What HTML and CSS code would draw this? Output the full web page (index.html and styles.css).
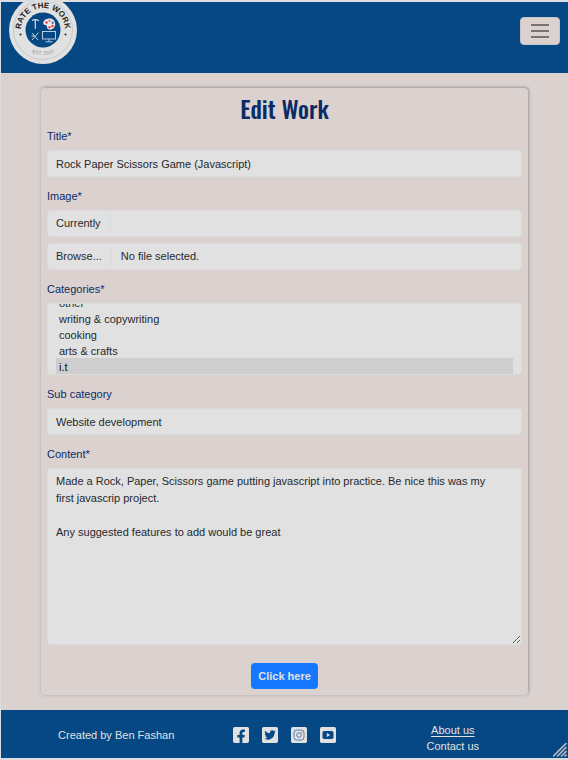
FILE: index.html
```html
<!DOCTYPE html>
<html lang="en">
<head>
<meta charset="utf-8">
<meta name="viewport" content="width=device-width, initial-scale=1">
<title>Edit Work</title>
<link rel="stylesheet" href="styles.css">
</head>
<body>
<header class="site-header">
  <a class="logo" href="#" aria-label="Rate the Work">
    <svg viewBox="0 0 68 68">
      <defs>
        <path id="arc-top" d="M12 34a22 22 0 0 1 44 0"/>
        <path id="arc-bottom" d="M9 34a25 25 0 0 0 50 0"/>
      </defs>
      <circle cx="34" cy="34" r="34" fill="#e1e1e1"/>
      <circle cx="34" cy="34" r="29.500" fill="none" stroke="#b4b8be" stroke-width=".6"/>
      <circle cx="34" cy="34" r="17.500" fill="#064884"/>
      <text class="logo-name" text-anchor="middle"><textPath href="#arc-top" startOffset="50%">RATE THE WORK</textPath></text>
      <text class="logo-est" text-anchor="middle"><textPath href="#arc-bottom" startOffset="50%">EST. 2024</textPath></text>
      <circle cx="11.500" cy="38.500" r="1" fill="#222"/>
      <circle cx="56.500" cy="38.500" r="1" fill="#222"/>
      <path d="M23 24.500q3-2 7 .2M26.300 24v9" fill="none" stroke="#d4dce6" stroke-width="1.200"/>
      <path d="M41 22.500c-4.500 0-7 2.200-6.700 5 .2 1.600 1.600 1.500 2.700 1.700 1.500.3.500 3 2.200 4.100 2.500 1.500 7-.8 7-5 0-3.300-2.200-5.800-5.200-5.800z" fill="#f2e6e7"/>
      <circle cx="37.500" cy="26.500" r="1.200" fill="#d8434f"/><circle cx="40.500" cy="24.800" r="1.100" fill="#de6b48"/>
      <circle cx="43.700" cy="26.700" r="1.200" fill="#4776c0"/><circle cx="43.500" cy="30" r="1.200" fill="#d8434f"/><circle cx="40.500" cy="31.300" r="1.200" fill="#e04b5c"/>
      <path d="M23 37l6 7M29.500 36.500l-6.500 7.500M22.500 40h3" fill="none" stroke="#c3d0de" stroke-width="1"/>
      <rect x="33.500" y="35.500" width="13" height="7.500" fill="none" stroke="#b6cce2" stroke-width="1"/>
      <path d="M40 43v2.500M36.500 45.800h7" stroke="#b6cce2" stroke-width="1"/>
    </svg>
  </a>
  <button class="menu-toggle" type="button" aria-label="Toggle navigation">
    <svg viewBox="0 0 18 14"><path d="M0 1h18M0 7h18M0 13h18" stroke="#767372" stroke-width="1.800"/></svg>
  </button>
</header>

<main class="page">
  <form class="card">
    <h1>Edit Work</h1>

    <div class="field">
      <label for="title">Title*</label>
      <input class="control" id="title" type="text" value="Rock Paper Scissors Game (Javascript)">
    </div>

    <div class="field">
      <label for="image">Image*</label>
      <div class="control group current"><span class="addon">Currently</span></div>
      <input class="file-input" id="image" type="file">
      <label class="control group" for="image"><span class="addon">Browse...</span><span class="file-name">No file selected.</span></label>
    </div>

    <div class="field">
      <label for="categories">Categories*</label>
      <select class="control category-list" id="categories" multiple>
        <option>other</option>
        <option>writing &amp; copywriting</option>
        <option>cooking</option>
        <option>arts &amp; crafts</option>
        <option selected>i.t</option>
      </select>
    </div>

    <div class="field">
      <label for="sub">Sub category</label>
      <input class="control" id="sub" type="text" value="Website development">
    </div>

    <div class="field">
      <label for="content">Content*</label>
      <textarea class="control" id="content">Made a Rock, Paper, Scissors game putting javascript into practice. Be nice this was my first javascrip project.

Any suggested features to add would be great</textarea>
    </div>

    <button class="submit" type="submit">Click here</button>
  </form>
</main>

<footer class="site-footer">
  <p>Created by Ben Fashan</p>
  <nav class="social" aria-label="Social media">
    <a href="#" aria-label="Facebook"><svg viewBox="0 32 448 448"><path d="M400 32H48A48 48 0 0 0 0 80v352a48 48 0 0 0 48 48h137.250V327.690h-63V256h63v-54.640c0-62.150 37-96.480 93.670-96.480 27.140 0 55.520 4.840 55.520 4.840v61h-31.270c-30.810 0-40.420 19.120-40.420 38.730V256h68.780l-11 71.690h-57.780V480H400a48 48 0 0 0 48-48V80a48 48 0 0 0-48-48z"/></svg></a>
    <a href="#" aria-label="Twitter"><svg viewBox="0 32 448 448"><path d="M400 32H48C21.500 32 0 53.500 0 80v352c0 26.500 21.500 48 48 48h352c26.500 0 48-21.500 48-48V80c0-26.500-21.500-48-48-48zm-48.900 158.800c.2 2.800.2 5.700.2 8.500 0 86.700-66 186.600-186.600 186.600-37.200 0-71.700-10.800-100.700-29.400 5.300.6 10.400.8 15.800.8 30.700 0 58.900-10.400 81.400-28-28.800-.6-53-19.500-61.300-45.500 10.100 1.500 19.200 1.500 29.600-1.200-30-6.100-52.500-32.500-52.500-64.400v-.8c8.700 4.900 18.900 7.900 29.600 8.300a65.447 65.447 0 0 1-29.200-54.600c0-12.200 3.200-23.400 8.900-33.100 32.300 39.800 80.800 65.800 135.200 68.600-9.300-44.500 24-80.600 64-80.600 18.900 0 35.900 7.900 47.900 20.700 14.800-2.800 29-8.300 41.600-15.800-4.900 15.200-15.200 28-28.800 36.100 13.200-1.400 26-5.100 37.800-10.200-8.900 13.100-20.100 24.700-32.900 34z"/></svg></a>
    <a href="#" aria-label="Instagram"><svg viewBox="0 0 16 16"><rect width="16" height="16" rx="1.700"/><rect x="3" y="3" width="10" height="10" rx="2.800" fill="none" stroke="#5d7fae" stroke-width="1"/><circle cx="8" cy="8" r="2.300" fill="none" stroke="#5d7fae" stroke-width="1"/><circle cx="10.800" cy="5.200" r=".6" fill="#5d7fae"/></svg></a>
    <a href="#" aria-label="YouTube"><svg viewBox="0 0 16 16"><rect width="16" height="16" rx="1.700"/><rect x="2.500" y="4" width="11" height="8" rx="1.800" fill="#064884"/><path d="M6.800 6.100v3.800L10.200 8z"/></svg></a>
  </nav>
  <nav class="links" aria-label="Site links">
    <a class="active" href="#">About us</a>
    <a href="#">Contact us</a>
  </nav>
  <svg class="grip" viewBox="0 0 14 14" aria-hidden="true"><path d="M0 13.500L13.500 0M4 13.500L13.500 4M8 13.500L13.500 8M11.500 13.500l2-2" stroke="#b4b8be" stroke-width="1.600"/></svg>
</footer>
</body>
</html>
```
FILE: styles.css
```css
* { box-sizing: border-box; }

body {
  margin: 0;
  min-height: 100vh;
  padding: 2px 0 2px 1px;
  display: flex;
  flex-direction: column;
  background: #dcdddf;
  color: #25292d;
  font: 11px/16px "Liberation Sans", Arial, sans-serif;
}

.site-header {
  height: 71px;
  padding: 0 8px;
  display: flex;
  justify-content: space-between;
  background: #064884;
  overflow: hidden;
}

.logo { width: 68px; height: 68px; margin-top: -6px; }
.logo svg, .menu-toggle svg, .social svg { display: block; width: 100%; }
.logo-name { font: bold 8px "Liberation Sans", Arial, sans-serif; fill: #222; }
.logo-est { font: 5px "Liberation Sans", Arial, sans-serif; fill: #92969b; }

.menu-toggle {
  width: 40px;
  height: 28px;
  margin-top: 15px;
  padding: 0 10px;
  border: 1px solid #cdc6c8;
  border-radius: 4px;
  background: #dbd2d0;
}

.page {
  flex: 1;
  padding: 15px 40px;
  background: #dbd2d0;
}

.card {
  padding: 5px 6px 6px;
  display: flex;
  flex-direction: column;
  gap: 10px;
  border-radius: 4px;
  background: #dbd2d0;
  box-shadow: 1px -1px 3px rgba(0, 0, 0, .22), 0 0 4px rgba(0, 0, 0, .12);
}

h1 {
  margin: 0 0 -6px;
  color: #0b2b66;
  font: 500 24px/30px Oswald, "Roboto Condensed", "Liberation Sans Narrow", "Liberation Sans", sans-serif;
  text-align: center;
}

.field { display: flex; flex-direction: column; }

.field > label:first-child {
  margin-bottom: 5px;
  color: #0b2b66;
  line-height: 18px;
}

.control {
  width: 100%;
  height: 27px;
  margin: 0;
  padding: 4px 8px;
  border: 1px solid #d9dcde;
  border-radius: 4px;
  background: #e1e1e1;
  color: inherit;
  font: inherit;
}

.group { display: flex; padding: 0; line-height: 25px; }
.current { margin-bottom: 6px; }
.addon { padding: 0 9px 0 8px; border-right: 1px solid #d9dcde; }
.file-name { padding: 0 9px; }
.file-input { position: absolute; opacity: 0; width: 1px; height: 1px; }

.category-list {
  height: 72px;
  padding: 0 8px;
  scrollbar-width: none;
}
.category-list option { min-height: 16px; padding: 3px 3px 0; line-height: 13px; }

textarea.control {
  height: 177px;
  padding-right: 20px;
  line-height: 17px;
  resize: vertical;
}

.submit {
  align-self: center;
  height: 26px;
  margin-top: 8px;
  padding: 0 7px;
  border: 0;
  border-radius: 4px;
  background: #1677ff;
  color: #e1e1e1;
  font: bold 11px/16px "Liberation Sans", Arial, sans-serif;
}

.site-footer {
  position: relative;
  padding: 12px 31px 4px;
  display: grid;
  grid-template-columns: repeat(3, 1fr);
  background: #064884;
  color: #e1e1e1;
  text-align: center;
}
.site-footer p { margin: 0; line-height: 26px; }
.site-footer a { color: inherit; text-decoration: none; }

.social { height: 26px; display: flex; justify-content: center; align-items: center; gap: 13px; }
.social a { width: 16px; }
.social svg { fill: #e1e1e1; }

.links { display: flex; flex-direction: column; align-items: center; }
.links .active { text-decoration: underline; text-underline-offset: 2px; }

.grip { position: absolute; right: 1px; bottom: 1px; width: 14px; height: 14px; }
```
